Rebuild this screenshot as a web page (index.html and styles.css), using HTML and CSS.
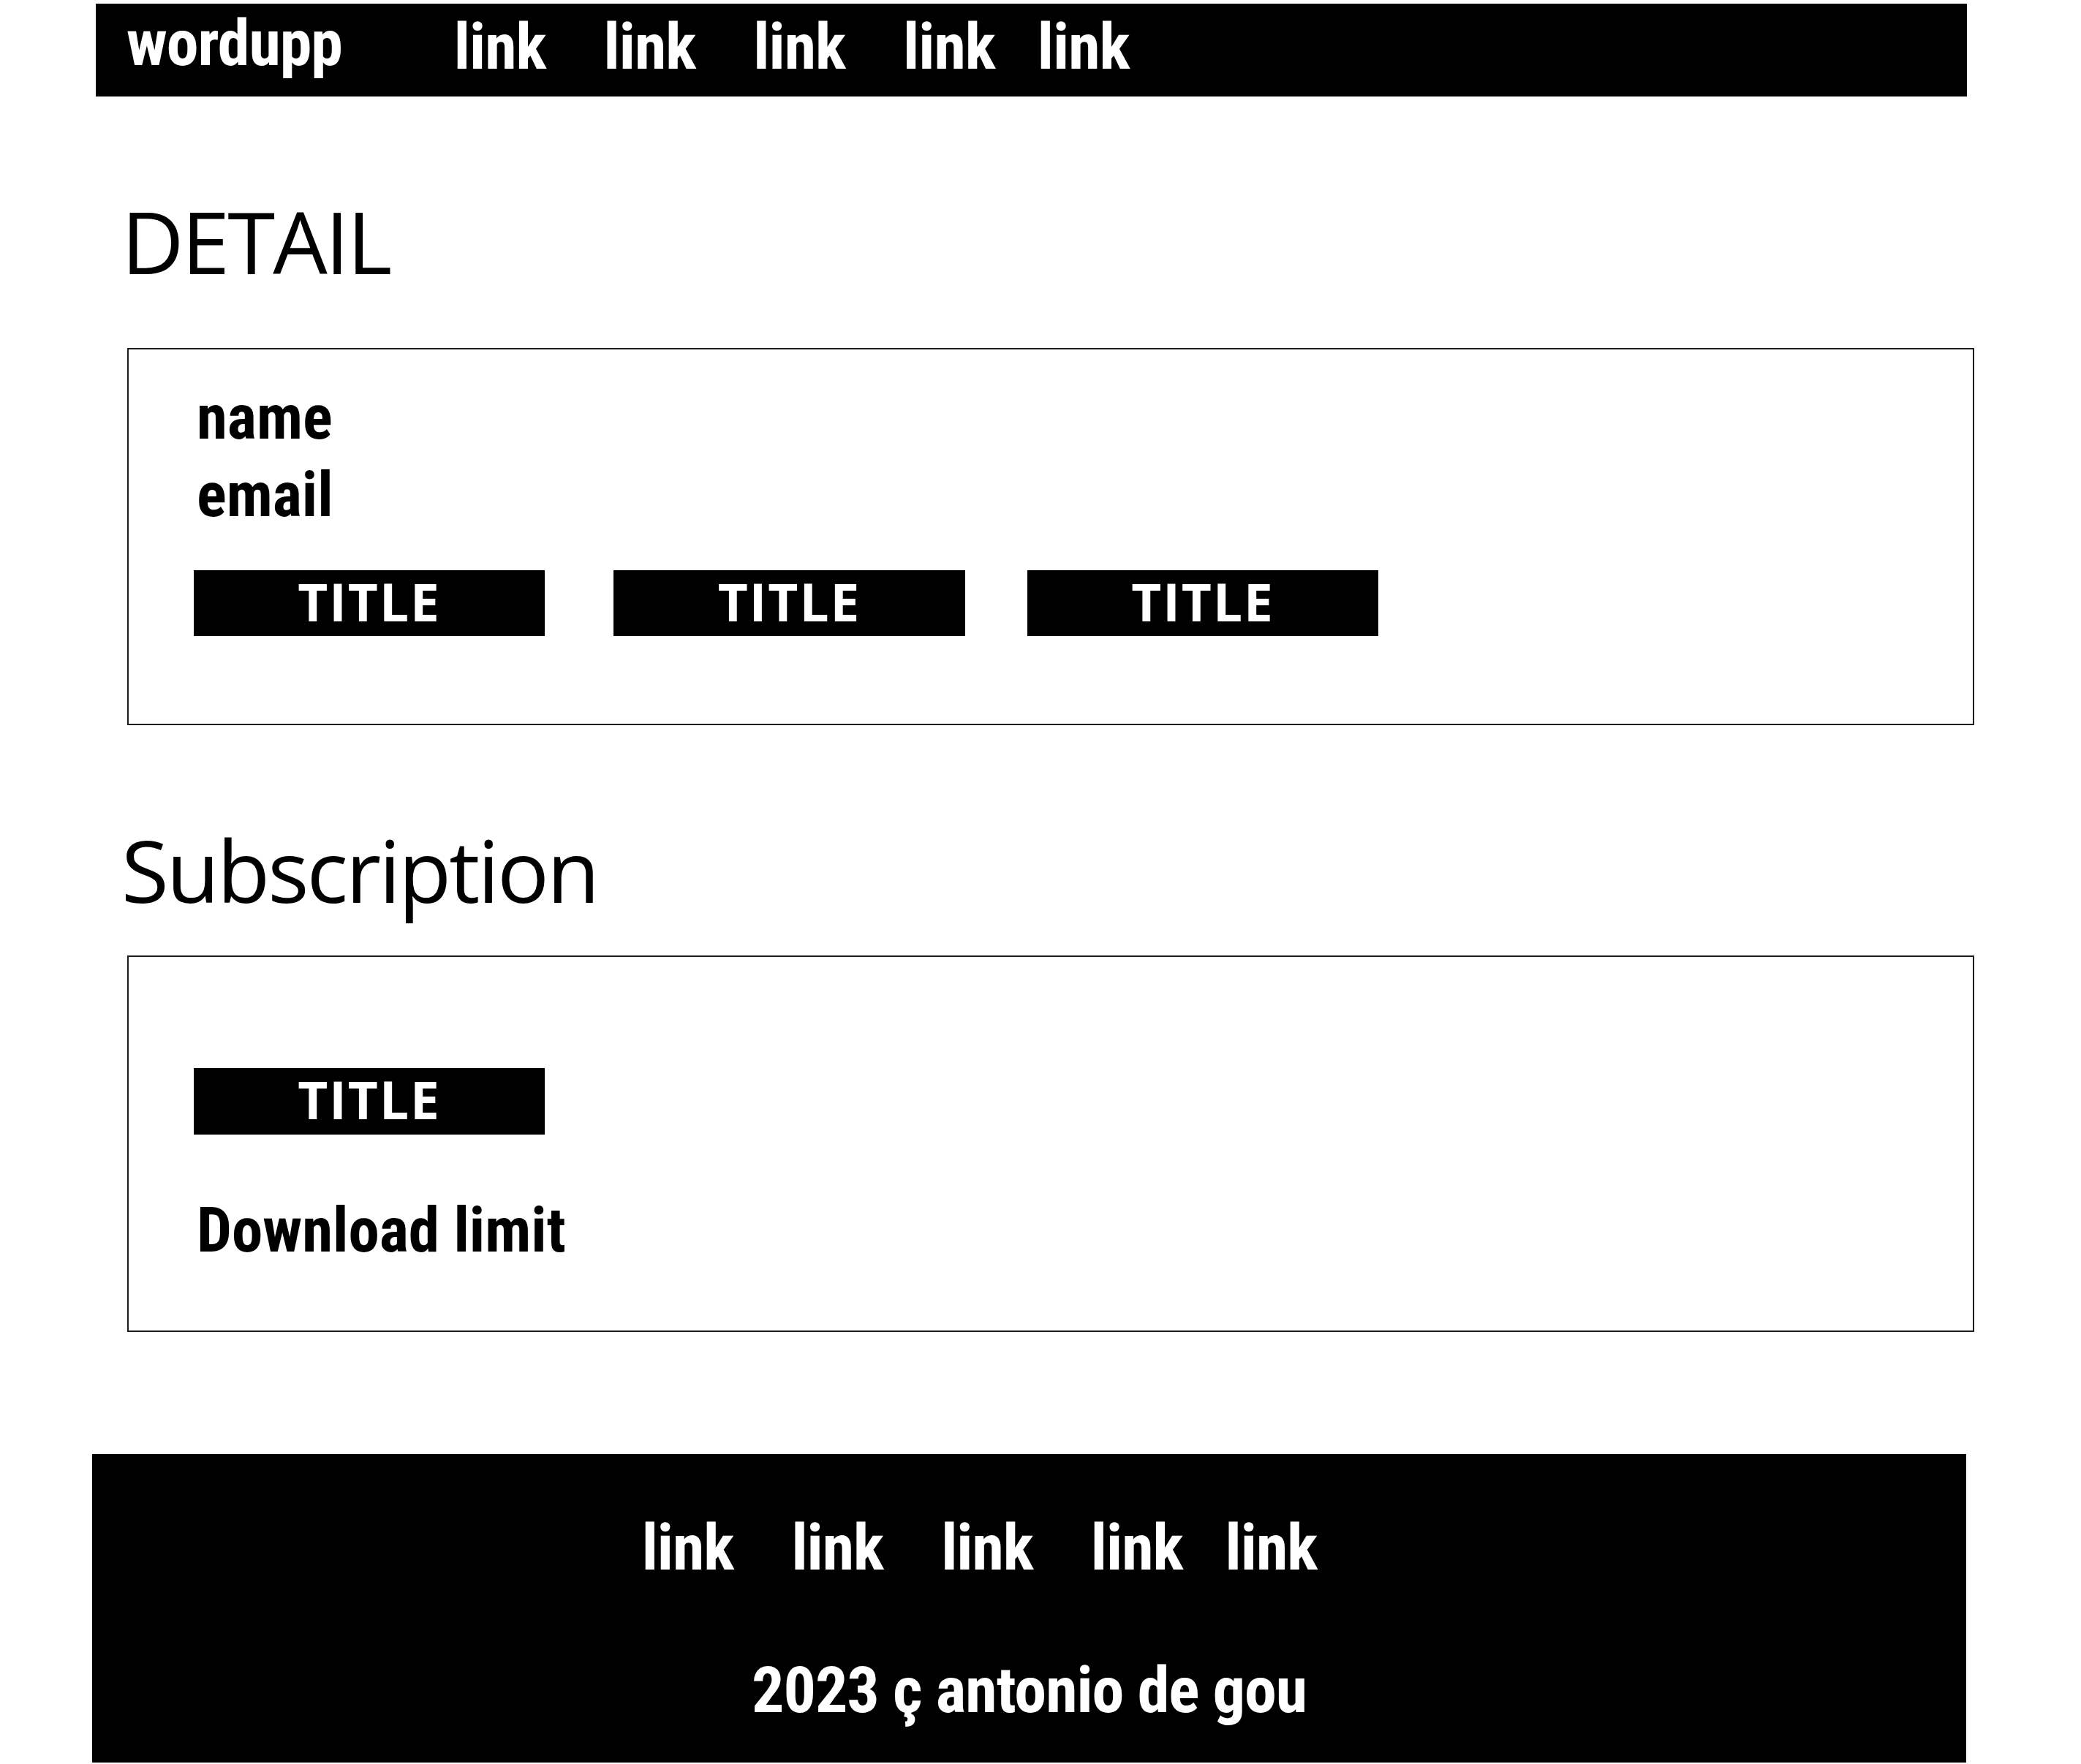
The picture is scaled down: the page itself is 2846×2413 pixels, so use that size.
FILE: index.html
```html
<!DOCTYPE html>
<html lang="en">
<head>
<meta charset="utf-8">
<title>wordupp – Detail</title>
<link rel="stylesheet" href="styles.css">
</head>
<body>
<header class="topbar">
  <span class="brand">wordupp</span>
  <nav class="nav">
    <a href="#">link</a>
    <a href="#">link</a>
    <a href="#">link</a>
    <a href="#">link</a>
    <a href="#">link</a>
  </nav>
</header>

<main>
  <h1 class="section-title title-detail">DETAIL</h1>
  <section class="card card-detail">
    <div class="info">name</div>
    <div class="info">email</div>
    <div class="actions">
      <button class="btn">TITLE</button>
      <button class="btn">TITLE</button>
      <button class="btn">TITLE</button>
    </div>
  </section>

  <h2 class="section-title title-sub">Subscription</h2>
  <section class="card card-sub">
    <div class="actions">
      <button class="btn">TITLE</button>
    </div>
    <div class="info limit">Download limit</div>
  </section>
</main>

<footer class="footer">
  <nav class="nav footer-nav">
    <a href="#">link</a>
    <a href="#">link</a>
    <a href="#">link</a>
    <a href="#">link</a>
    <a href="#">link</a>
  </nav>
  <p class="copy">2023 ç antonio de gou</p>
</footer>
</body>
</html>
```

FILE: styles.css
```css
html, body {
  margin: 0;
  padding: 0;
  background: #fff;
  color: #000;
}

.topbar,
.footer,
.info,
.nav a {
  font-family: "Liberation Sans Narrow", "Arial Narrow", "Roboto Condensed", "Liberation Sans", sans-serif;
  font-weight: 700;
}

.topbar {
  box-sizing: border-box;
  margin: 5px 0 0 131px;
  width: 2559px;
  height: 127px;
  padding: 15px 0 0 42px;
  background: #000;
  color: #fff;
  display: flex;
  align-items: flex-start;
}

.brand {
  font-size: 88px;
  line-height: 88px;
  letter-spacing: -1px;
  margin-top: -5px;
  margin-right: 153px;
}

.nav {
  display: flex;
  gap: 79px;
}

.nav a {
  color: #fff;
  text-decoration: none;
  font-size: 88px;
  line-height: 88px;
  letter-spacing: -1px;
}

.nav a:last-child {
  margin-left: -21px;
}

.section-title {
  font-family: "Open Sans", "Noto Sans", sans-serif;
  font-weight: 400;
  font-size: 118px;
  line-height: 118px;
  letter-spacing: -3px;
  margin: 139px 0 0 166px;
}

.title-detail {
  margin-bottom: 87px;
}

.title-sub {
  margin-bottom: 58px;
}

.card {
  box-sizing: border-box;
  margin-left: 174px;
  width: 2526px;
  border: 2px solid #1e1e1e;
  padding-left: 89px;
}

.card-detail {
  height: 516px;
  padding-top: 40px;
}

.card-sub {
  height: 515px;
  padding-top: 152px;
}

.info {
  font-size: 85px;
  line-height: 106px;
  padding-left: 4px;
}

.actions {
  display: flex;
}

.card-detail .actions {
  margin-top: 50px;
}

.btn {
  box-sizing: border-box;
  width: 480px;
  height: 90px;
  border: 0;
  padding: 0 0 6px 0;
  margin: 0;
  background: #000;
  color: #fff;
  font-family: "Open Sans", "Noto Sans", sans-serif;
  font-weight: 700;
  font-size: 71px;
  line-height: 1;
  letter-spacing: 2px;
  display: flex;
  align-items: center;
  justify-content: center;
}

.btn:nth-child(2) {
  margin-left: 94px;
  width: 481px;
}

.btn:nth-child(3) {
  margin-left: 85px;
}

.card-sub .btn {
  height: 91px;
}

.limit {
  margin-top: 78px;
}

.footer {
  box-sizing: border-box;
  margin: 167px 0 0 126px;
  width: 2563px;
  height: 422px;
  padding-top: 84px;
  background: #000;
  color: #fff;
  display: flex;
  flex-direction: column;
  align-items: center;
}

.footer-nav {
  padding-right: 136px;
}

.copy {
  margin: 107px 0 0 0;
  font-size: 88px;
  line-height: 88px;
  letter-spacing: -1px;
}
```
